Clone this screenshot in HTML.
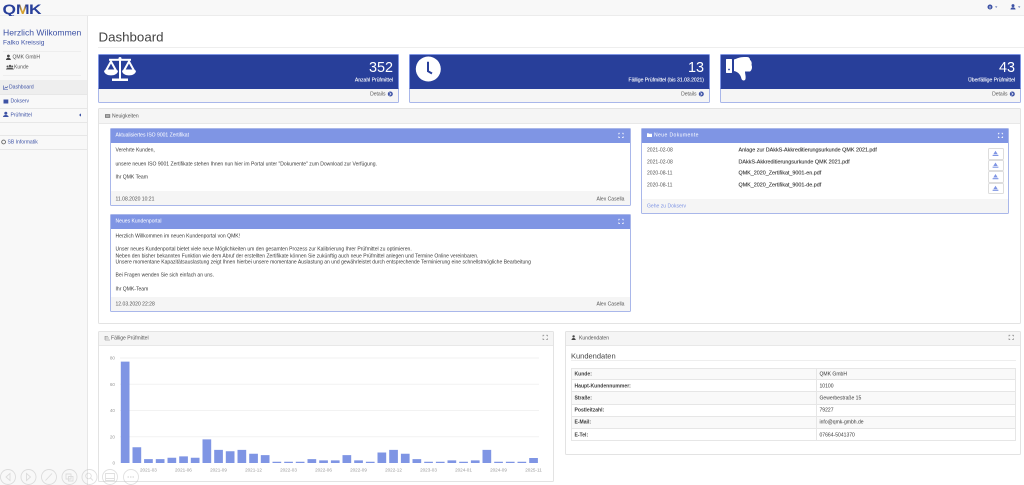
<!DOCTYPE html>
<html lang="de"><head><meta charset="utf-8"><title>Dashboard</title>
<style>
html,body{margin:0;padding:0;background:#fff}
#w{position:relative;width:1024px;height:485px;overflow:hidden;background:#fff;font-family:"Liberation Sans",sans-serif;color:#3a3a3a;font-size:5.05px;filter:blur(.38px)}
#w div{position:absolute;box-sizing:border-box}
.t{position:absolute;white-space:nowrap;line-height:1;transform:translateY(calc(-50% + 1px))}
.r{transform:translate(-100%,calc(-50% + 1px))}
.b{font-weight:bold}
.s{background:#283f9a;height:34px;top:54px;width:301px;border-radius:1.5px 1.5px 0 0;border:1px solid #7f95e4;border-bottom:0}
.f{background:#f5f5f5;height:15px;top:88px;width:301px;border:1px solid #a9b7ea;border-top:1px solid #283f9a;border-radius:0 0 1.5px 1.5px}
.p{background:#fff;border:1px solid #e3e3e3;border-radius:1.5px}
.h{background:#f5f5f5;border-bottom:1px solid #e8e8e8}
.c{background:#fff;border:1px solid #a9b7ea;border-radius:1.5px}
.ch{background:#7f95e4;left:0;top:0;right:0;height:14px}
.cf{background:#f5f5f5;left:0;right:0;bottom:0}
.w{color:#fff}
.l{background:#e7e7e7;height:1px}
.g{color:#555}
.n{font-size:5.4px;-webkit-text-stroke:.12px #333}
.tr{left:571px;width:445px;height:12.2px;border:1px solid #e6e6e6;border-top:0}
.btn{left:987.5px;width:16px;height:11.8px;background:#fff;border:1px solid #ddd;border-radius:1.5px}
</style></head><body>
<div id="w">
<div style="left:0;top:0;width:1024px;height:16px;background:#f8f8f8;border-bottom:1px solid #ececec"></div>
<div style="left:0;top:16px;width:88px;height:469px;background:#f8f8f8;border-right:1px solid #e7e7e7"></div>

<svg style="position:absolute;left:0;top:0" width="50" height="16"><defs><linearGradient id="m"><stop offset=".25" stop-color="#283f9a"/><stop offset=".38" stop-color="#d6a22f"/><stop offset=".62" stop-color="#d6a22f"/><stop offset=".75" stop-color="#283f9a"/></linearGradient></defs><text x="2.5" y="13.8" font-family="Liberation Sans" font-weight="bold" font-size="13.5" fill="#283f9a" textLength="13.5" lengthAdjust="spacingAndGlyphs">Q</text><text x="16" y="13.8" font-family="Liberation Sans" font-weight="bold" font-size="13.5" fill="url(#m)" textLength="13.5" lengthAdjust="spacingAndGlyphs">M</text><text x="29" y="13.8" font-family="Liberation Sans" font-weight="bold" font-size="13.5" fill="#283f9a" textLength="12.5" lengthAdjust="spacingAndGlyphs">K</text></svg>

<span class="t" style="left:3px;top:31.5px;font-size:8.6px;color:#3d52a5">Herzlich Wilkommen</span>
<span class="t" style="left:3px;top:43px;font-size:6.6px;color:#3d52a5">Falko Kreissig</span>
<div class="l" style="left:3px;top:51px;width:78px;background:#eee"></div>
<span class="t g" style="left:12.5px;top:57px">QMK GmbH</span>
<span class="t g" style="left:14px;top:67px">Kunde</span>
<div class="l" style="left:3px;top:74.5px;width:78px;background:#eee"></div>
<div style="left:0;top:80px;width:87px;height:14px;background:#eee"></div>
<div class="l" style="left:0;top:94px;width:87px"></div>
<div class="l" style="left:0;top:108px;width:87px"></div>
<div class="l" style="left:0;top:122px;width:87px"></div>
<div class="l" style="left:0;top:135px;width:87px"></div>
<div class="l" style="left:0;top:149px;width:87px"></div>
<span class="t" style="left:9px;top:87px;color:#3d52a5">Dashboard</span>
<span class="t" style="left:10.5px;top:101px;color:#3d52a5">Dokserv</span>
<span class="t" style="left:10.5px;top:114.5px;color:#3d52a5">Prüfmittel</span>
<span class="t" style="left:7.5px;top:141.5px;color:#3d52a5">SB Informatik</span>

<span class="t" style="left:98.5px;top:35.5px;font-size:13.3px;color:#444">Dashboard</span>
<div class="l" style="left:98px;top:46.5px;width:926px;background:#eee"></div>

<div class="s" style="left:98px"></div><div class="f" style="left:98px"></div>
<div class="s" style="left:409px"></div><div class="f" style="left:409px"></div>
<div class="s" style="left:720px"></div><div class="f" style="left:720px"></div>
<span class="t r w" style="left:393px;top:66.5px;font-size:14.4px">352</span>
<span class="t r w" style="left:393px;top:79.5px;-webkit-text-stroke:.1px #fff">Anzahl Prüfmittel</span>
<span class="t r g" style="left:385.5px;top:93.5px">Details</span>
<span class="t r w" style="left:704px;top:66.5px;font-size:14.4px">13</span>
<span class="t r w" style="left:704px;top:79.5px;-webkit-text-stroke:.1px #fff">Fällige Prüfmittel (bis 31.03.2021)</span>
<span class="t r g" style="left:696.5px;top:93.5px">Details</span>
<span class="t r w" style="left:1015px;top:66.5px;font-size:14.4px">43</span>
<span class="t r w" style="left:1015px;top:79.5px;-webkit-text-stroke:.1px #fff">Überfällige Prüfmittel</span>
<span class="t r g" style="left:1007.5px;top:93.5px">Details</span>

<div class="p" style="left:98px;top:108px;width:923px;height:216px"></div>
<div class="h" style="left:99px;top:109px;width:921px;height:14.5px"></div>
<span class="t g" style="left:112px;top:115.5px">Neuigkeiten</span>

<div class="c" style="left:110px;top:128px;width:520.5px;height:78px"><div class="ch"></div><div class="cf" style="height:14px"></div></div>
<span class="t w" style="left:115.5px;top:134.5px">Aktualisiertes ISO 9001 Zertifikat</span>
<span class="t" style="left:115.5px;top:150px">Verehrte Kunden,</span>
<span class="t" style="left:115.5px;top:163.5px">unsere neuen ISO 9001 Zertifikate stehen Ihnen nun hier im Portal unter "Dokumente" zum Download zur Verfügung.</span>
<span class="t" style="left:115.5px;top:177px">Ihr QMK Team</span>
<span class="t g" style="left:115.5px;top:199px">11.08.2020 10:21</span>
<span class="t r g" style="left:624.5px;top:199px">Alex Casella</span>

<div class="c" style="left:110px;top:214px;width:520.5px;height:98px"><div class="ch"></div><div class="cf" style="height:14.5px"></div></div>
<span class="t w" style="left:115.5px;top:220.5px">Neues Kundenportal</span>
<span class="t" style="left:115.5px;top:235.5px">Herzlich Willkommen im neuen Kundenportal von QMK!</span>
<span class="t" style="left:115.5px;top:249px">Unser neues Kundenportal bietet viele neue Möglichkeiten um den gesamten Prozess zur Kalibrierung Ihrer Prüfmittel zu optimieren.</span>
<span class="t" style="left:115.5px;top:255.5px">Neben den bisher bekannten Funktion wie dem Abruf der erstellten Zertifikate können Sie zukünftig auch neue Prüfmittel anlegen und Termine Online vereinbaren.</span>
<span class="t" style="left:115.5px;top:262px">Unsere momentane Kapazitätsauslastung zeigt Ihnen hierbei unsere momentane Auslastung an und gewährleistet durch entsprechende Terminierung eine schnellstmögliche Bearbeitung</span>
<span class="t" style="left:115.5px;top:275px">Bei Fragen wenden Sie sich einfach an uns.</span>
<span class="t" style="left:115.5px;top:288.5px">Ihr QMK-Team</span>
<span class="t g" style="left:115.5px;top:304px">12.03.2020 22:28</span>
<span class="t r g" style="left:624.5px;top:304px">Alex Casella</span>

<div class="c" style="left:641px;top:128px;width:368px;height:86px"><div class="ch"></div><div class="cf" style="height:14.5px"></div></div>
<span class="t w" style="left:654px;top:134.5px;letter-spacing:.4px">Neue Dokumente</span>
<span class="t g" style="left:647px;top:150px">2021-02-08</span>
<span class="t g" style="left:647px;top:161.5px">2021-02-08</span>
<span class="t g" style="left:647px;top:173.2px">2020-08-11</span>
<span class="t g" style="left:647px;top:184.8px">2020-08-11</span>
<span class="t n" style="left:738.5px;top:150px">Anlage zur DAkkS-Akkreditierungsurkunde QMK 2021.pdf</span>
<span class="t n" style="left:738.5px;top:161.5px">DAkkS-Akkreditierungsurkunde QMK 2021.pdf</span>
<span class="t n" style="left:738.5px;top:173.2px">QMK_2020_Zertifikat_9001-en.pdf</span>
<span class="t n" style="left:738.5px;top:184.8px">QMK_2020_Zertifikat_9001-de.pdf</span>
<div class="btn" style="top:147.8px"></div><div class="btn" style="top:159.5px"></div><div class="btn" style="top:171px"></div><div class="btn" style="top:182.7px"></div>
<span class="t" style="left:647px;top:206px;color:#7f95e4">Gehe zu Dokserv</span>

<div class="p" style="left:98px;top:331px;width:456px;height:151px"></div>
<div class="h" style="left:99px;top:332px;width:454px;height:14px"></div>
<span class="t g" style="left:111px;top:337.5px">Fällige Prüfmittel</span>

<div class="p" style="left:565px;top:331px;width:456px;height:124px"></div>
<div class="h" style="left:566px;top:332px;width:454px;height:14px"></div>
<span class="t g" style="left:579px;top:337.5px">Kundendaten</span>
<span class="t" style="left:571px;top:354.5px;font-size:7.5px;color:#444">Kundendaten</span>
<div class="l" style="left:571px;top:360.3px;width:445px;background:#eee"></div>

<div class="tr" style="top:368px;height:12.2px;background:#f9f9f9;border-top:1px solid #e6e6e6"></div>
<div class="tr" style="top:380.2px"></div>
<div class="tr" style="top:392.4px;background:#f9f9f9"></div>
<div class="tr" style="top:404.6px"></div>
<div class="tr" style="top:416.8px;background:#f9f9f9"></div>
<div class="tr" style="top:429px"></div>
<div style="left:816px;top:368px;width:1px;height:73.2px;background:#e6e6e6"></div>
<span class="t b" style="left:574.5px;top:373.5px">Kunde:</span><span class="t" style="left:819.5px;top:373.5px">QMK GmbH</span>
<span class="t b" style="left:574.5px;top:385.5px">Haupt-Kundennummer:</span><span class="t" style="left:819.5px;top:385.5px">10100</span>
<span class="t b" style="left:574.5px;top:397.5px">Straße:</span><span class="t" style="left:819.5px;top:397.5px">Gewerbestraße 15</span>
<span class="t b" style="left:574.5px;top:410px">Postleitzahl:</span><span class="t" style="left:819.5px;top:410px">79227</span>
<span class="t b" style="left:574.5px;top:422px">E-Mail:</span><span class="t" style="left:819.5px;top:422px">info@qmk-gmbh.de</span>
<span class="t b" style="left:574.5px;top:434.5px">E-Tel:</span><span class="t" style="left:819.5px;top:434.5px">07664-5041370</span>

<svg style="position:absolute;left:0;top:0" width="1024" height="485" viewBox="0 0 1024 485" font-family="Liberation Sans" font-size="4.6" fill="#999">
<path d="M120 358H539M120 384.2H539M120 410.5H539M120 436.8H539" stroke="#f2f2f2" stroke-width="1"/>
<g text-anchor="end"><text x="115" y="359.6">80</text><text x="115" y="385.8">60</text><text x="115" y="412">40</text><text x="115" y="438.4">20</text><text x="115" y="464.6">0</text></g>
<path fill="#7f95e4" d="M120.8 361.6h8.7V463h-8.7zM132.5 447.3h8.7V463h-8.7zM144.1 459.1h8.7V463h-8.7zM155.8 459.1h8.7V463h-8.7zM167.5 457.8h8.7V463h-8.7zM179.2 456.4h8.7V463h-8.7zM190.8 457.8h8.7V463h-8.7zM202.5 439.4h8.7V463h-8.7zM214.2 449.9h8.7V463h-8.7zM225.8 451.2h8.7V463h-8.7zM237.5 449.9h8.7V463h-8.7zM249.2 453.8h8.7V463h-8.7zM260.8 455.1h8.7V463h-8.7zM272.5 461.7h8.7V463h-8.7zM284.2 461.7h8.7V463h-8.7zM295.8 461.7h8.7V463h-8.7zM307.5 459.1h8.7V463h-8.7zM319.2 460.4h8.7V463h-8.7zM330.9 460.4h8.7V463h-8.7zM342.5 455.1h8.7V463h-8.7zM354.2 460.4h8.7V463h-8.7zM365.9 461.7h8.7V463h-8.7zM377.5 452.5h8.7V463h-8.7zM389.2 449.9h8.7V463h-8.7zM400.9 453.8h8.7V463h-8.7zM412.5 459.1h8.7V463h-8.7zM424.2 461.7h8.7V463h-8.7zM435.9 461.7h8.7V463h-8.7zM447.5 460.4h8.7V463h-8.7zM459.2 461.7h8.7V463h-8.7zM470.9 460.4h8.7V463h-8.7zM482.5 449.9h8.7V463h-8.7zM494.2 461.7h8.7V463h-8.7zM505.9 461.7h8.7V463h-8.7zM517.5 461.7h8.7V463h-8.7zM529.2 458h8.7V463h-8.7z"/>
<g text-anchor="middle"><text x="148.4" y="471.5">2021-03</text><text x="183.4" y="471.5">2021-06</text><text x="218.5" y="471.5">2021-09</text><text x="253.5" y="471.5">2021-12</text><text x="288.5" y="471.5">2022-03</text><text x="323.5" y="471.5">2022-06</text><text x="358.5" y="471.5">2022-09</text><text x="393.5" y="471.5">2022-12</text><text x="428.5" y="471.5">2023-03</text><text x="463.5" y="471.5">2024-01</text><text x="498.5" y="471.5">2024-09</text><text x="533.5" y="471.5">2025-11</text></g>

<g transform="translate(104,57)" fill="#fff">
<circle cx="16" cy="1.5" r="1.5"/><rect x="15" y="1" width="2" height="21"/><rect x="5" y="1.8" width="22" height="2"/><rect x="8" y="21.5" width="16" height="2.5"/>
<path d="M7 4.5L2 13.5H12Z" fill="none" stroke="#fff" stroke-width="2"/><path d="M0 13.5H14C14 20 0 20 0 13.5Z"/>
<path d="M25 4.5L20 13.5H30Z" fill="none" stroke="#fff" stroke-width="2"/><path d="M18 13.5H32C32 20 18 20 18 13.5Z"/>
</g>
<circle cx="428.3" cy="69" r="12.5" fill="#fff"/><path d="M428 61.7V71.2L432 73.5" fill="none" stroke="#283f9a" stroke-width="2"/>
<g transform="translate(726,57)" fill="#fff"><rect x="0" y="2" width="6" height="14" rx=".6"/><circle cx="3" cy="12.5" r=".9" fill="#283f9a"/>
<path d="M8 2.5C11 1.5 14 0 18 0H21C23 0 24 1.5 24 3C25.5 4 26 6 25.5 8C26.5 10 26 13 24 14.5H19C19 17 20 19 19.5 22C19 24 16.5 24 15.5 22C15 19 13 15 8 14Z"/></g>
<g fill="#3d52a5"><circle cx="390.3" cy="94" r="2.5"/><circle cx="701.3" cy="94" r="2.5"/><circle cx="1012.3" cy="94" r="2.5"/></g>
<path d="M389.5 92.6L391 94L389.5 95.4M700.5 92.6L702 94L700.5 95.4M1011.5 92.6L1013 94L1011.5 95.4" fill="none" stroke="#fff" stroke-width=".7"/>

<circle cx="990" cy="7" r="2.5" fill="#3d52a5"/><rect x="989.6" y="6" width=".8" height="2.5" fill="#fff"/><path d="M995 6.5h2.4l-1.2 1.2z" fill="#3d52a5"/>
<circle cx="1013" cy="5.6" r="1.5" fill="#3d52a5"/><path d="M1010.5 9.5C1010.5 6.5 1015.5 6.5 1015.5 9.5z" fill="#3d52a5"/><path d="M1018 6.5h2.4l-1.2 1.2z" fill="#3d52a5"/>

<circle cx="8.4" cy="56" r="1.4" fill="#444"/><path d="M6 60C6 57 10.8 57 10.8 60z" fill="#444"/>
<g fill="#555"><circle cx="10" cy="66" r="1.2"/><circle cx="7.5" cy="66.5" r="1"/><circle cx="12.2" cy="66.5" r="1"/><path d="M6 69.5C6 67 13.8 67 13.8 69.5z"/></g>
<path d="M3.5 85.5V89.5H8M4.5 88.5L5.8 87L6.7 87.8L8 86.3" fill="none" stroke="#3d52a5" stroke-width=".6"/>
<rect x="3.5" y="99.5" width="4.8" height="4" fill="#3d52a5"/>
<g fill="#3d52a5"><circle cx="5.8" cy="113.3" r="1.5"/><path d="M3 117C3 114.3 8.6 114.3 8.6 117z"/></g>
<path d="M81 113.4V116.6L79 115z" fill="#3d52a5"/>
<circle cx="3.6" cy="142" r="1.9" fill="none" stroke="#666" stroke-width=".9"/>

<rect x="105" y="114.2" width="5.2" height="3.6" fill="#777"/><path d="M105.8 115.3H109.4M105.8 116.6H109.4" stroke="#ddd" stroke-width=".5"/>
<path d="M647 133.2H648.6L649 133.8H652V137H647Z" fill="#fff"/>
<path d="M105 336V340H110M105 336.6H108M105 338H109" fill="none" stroke="#777" stroke-width=".5"/>
<circle cx="573.6" cy="336.4" r="1.2" fill="#444"/><path d="M571.5 340C571.5 337.4 575.7 337.4 575.7 340z" fill="#444"/>

<path d="M618.8 134.4V133.2H620M622 133.2H623.2V134.4M623.2 136.4V137.6H622M620 137.6H618.8V136.4" fill="none" stroke="#fff" stroke-width=".7"/>
<path d="M618.8 220.4V219.2H620M622 219.2H623.2V220.4M623.2 222.4V223.6H622M620 223.6H618.8V222.4" fill="none" stroke="#fff" stroke-width=".7"/>
<path d="M998.3 134.4V133.2H999.5M1001.5 133.2H1002.7V134.4M1002.7 136.4V137.6H1001.5M999.5 137.6H998.3V136.4" fill="none" stroke="#fff" stroke-width=".7"/>
<path d="M543 336.4V335.2H544.2M546.2 335.2H547.4V336.4M547.4 338.4V339.6H546.2M544.2 339.6H543V338.4" fill="none" stroke="#777" stroke-width=".6"/>
<path d="M1009 336.4V335.2H1010.2M1012.2 335.2H1013.4V336.4M1013.4 338.4V339.6H1012.2M1010.2 339.6H1009V338.4" fill="none" stroke="#777" stroke-width=".6"/>

<g fill="#7f95e4"><path d="M995.5 150.8L993.3 154.3H997.7ZM992.6 154.9H998.4V156H992.6Z"/><path d="M995.5 162.5L993.3 166H997.7ZM992.6 166.6H998.4V167.7H992.6Z"/><path d="M995.5 174L993.3 177.5H997.7ZM992.6 178.1H998.4V179.2H992.6Z"/><path d="M995.5 185.7L993.3 189.2H997.7ZM992.6 189.8H998.4V190.9H992.6Z"/></g>

<g fill="none" stroke="#b5b5b5" stroke-opacity=".42" stroke-width=".9">
<circle cx="8" cy="477" r="7.5"/><circle cx="28.5" cy="477" r="7.5"/><circle cx="49" cy="477" r="7.5"/><circle cx="69.5" cy="477" r="7.5"/><circle cx="89.5" cy="477" r="7.5"/><circle cx="110" cy="477" r="7.5"/><circle cx="131" cy="477" r="7.5"/>
<path d="M10 473.5L6 477L10 480.5Z"/><path d="M26.5 473.5L30.5 477L26.5 480.5Z"/><path d="M45.5 480.5L52 473.5"/><path d="M66 474H71V479H66ZM68.5 476.5H73V481H68.5Z"/><circle cx="88.5" cy="476" r="2.8"/><path d="M90.5 478L93 480.5"/><path d="M105.5 473.5H114.5V480.5H105.5ZM105.5 478.5H114.5"/>
<path d="M127.5 477H134.5" stroke-dasharray="1.5 1" stroke-width="1.4"/>
</g>
</svg>
</div>
</body></html>
